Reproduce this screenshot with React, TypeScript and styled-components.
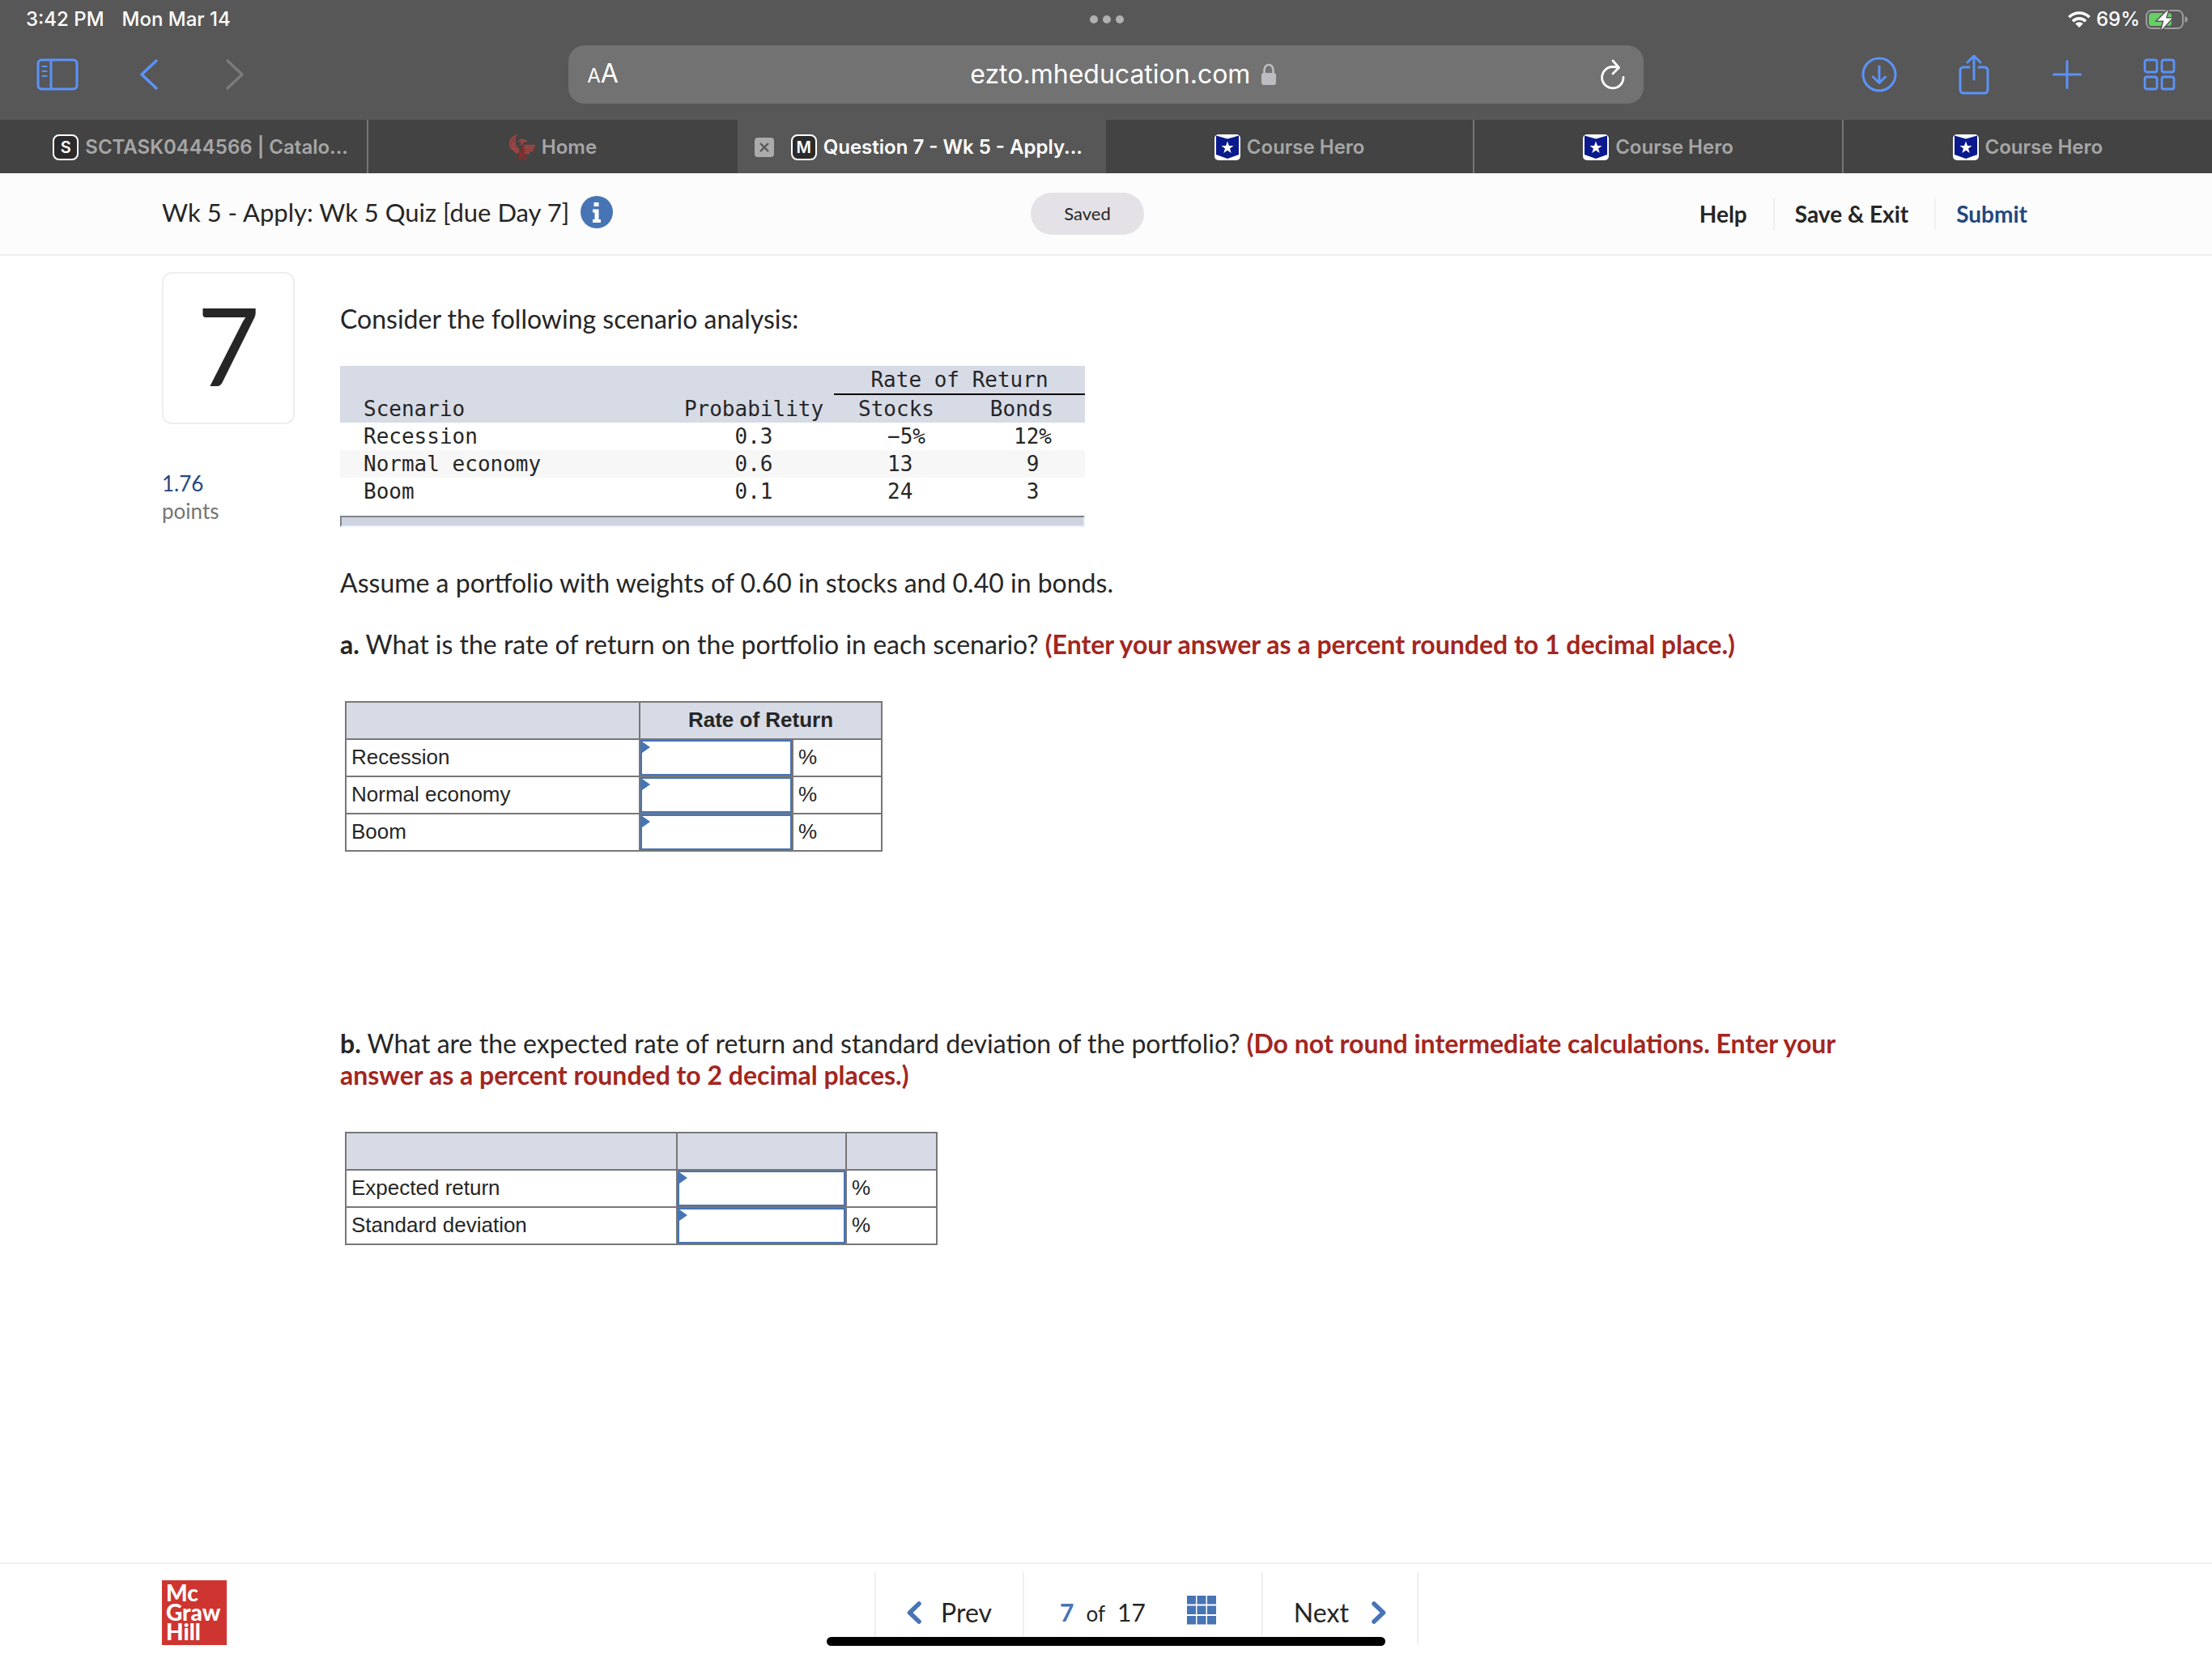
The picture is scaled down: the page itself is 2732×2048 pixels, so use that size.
import React from 'react';
import styled, { createGlobalStyle } from 'styled-components';

const system = `Inter, "Liberation Sans", sans-serif`;
const brand = `Lato, "Open Sans", sans-serif`;
const plain = `"Liberation Sans", Arial, sans-serif`;
const mono = `"DejaVu Sans Mono", "Liberation Mono", monospace`;

const chrome = '#575757';
const accent = '#5b93fa';
const blue = '#4774b5';
const navy = '#23487f';
const ink = '#262626';
const shade = '#d7dbe6';
const line = '#f0f0f0';
const rule = '#777777';

const GlobalStyle = createGlobalStyle`
  *, *::before, *::after { box-sizing: border-box; }
  body { margin: 0; background: #fff; color: ${ink}; font-family: ${brand}; }
  button { border: 0; padding: 0; margin: 0; background: none; font: inherit; color: inherit; cursor: pointer; }
  a { color: inherit; text-decoration: none; }
  svg { display: block; flex: none; }
`;

const Page = styled.div`
  display: flex;
  flex-direction: column;
  min-height: 100vh;
`;

/* Browser chrome */

const Chrome = styled.header`
  background: ${chrome};
  color: #fff;
  font-family: ${system};
`;

const StatusBar = styled.div`
  display: grid;
  grid-template-columns: 1fr auto 1fr;
  align-items: center;
  height: 48px;
  padding: 0 30px 0 32px;
  font-size: 24px;
  line-height: 30px;
  font-weight: 500;
`;

const StatusGroup = styled.div<{ $end?: boolean; $gap: number }>`
  display: flex;
  align-items: center;
  justify-content: ${(p) => (p.$end ? 'flex-end' : 'flex-start')};
  gap: ${(p) => p.$gap}px;
`;

const Toolbar = styled.div`
  display: grid;
  grid-template-columns: 1fr 48.6% 1fr;
  align-items: center;
  padding: 8px 0 20px;
`;

const ToolGroup = styled.nav<{ $end?: boolean }>`
  display: flex;
  align-items: center;
  justify-content: ${(p) => (p.$end ? 'flex-end' : 'flex-start')};
  gap: 76px;
  padding: 0 45px;
`;

const ToolButton = styled.button<{ $off?: boolean }>`
  color: ${(p) => (p.$off ? '#7b7b7b' : accent)};
`;

const AddressBar = styled.div`
  display: flex;
  align-items: center;
  height: 72px;
  padding: 0 23px;
  border-radius: 20px;
  background: #727272;
`;

const ReaderButton = styled.button`
  display: flex;
  align-items: baseline;
  font-size: 32px;
  line-height: 40px;
`;

const SmallA = styled.span`
  font-size: 24px;
`;

const Address = styled.button`
  flex: 1;
  display: flex;
  align-items: center;
  justify-content: center;
  gap: 14px;
  padding-left: 34px;
  font-size: 32px;
  line-height: 40px;
`;

const TabBar = styled.div`
  display: grid;
  grid-template-columns: repeat(6, minmax(0, 1fr));
  height: 66px;
  background: #434343;
`;

const Tab = styled.div<{ $active?: boolean; $long?: boolean; $edge?: boolean }>`
  display: flex;
  align-items: center;
  justify-content: ${(p) => (p.$active ? 'flex-start' : 'center')};
  gap: 21px;
  padding-top: 2px;
  padding-left: ${(p) => (p.$active ? 21 : p.$long ? 42 : 0)}px;
  border-right: ${(p) => (p.$edge ? '2px solid #757575' : '0')};
  background: ${(p) => (p.$active ? chrome : 'transparent')};
  color: ${(p) => (p.$active ? '#fff' : '#a6a6a6')};
`;

const TabLink = styled.a`
  display: flex;
  align-items: center;
  gap: 8px;
  font-size: 24px;
  line-height: 32px;
  font-weight: 600;
  white-space: nowrap;
`;

const LetterIcon = styled.span`
  display: flex;
  align-items: center;
  justify-content: center;
  width: 32px;
  height: 32px;
  border: 2px solid #fff;
  border-radius: 8px;
  background: #2b2b2b;
  color: #fff;
  font-size: 20px;
  line-height: 24px;
`;

/* Assignment header */

const Header = styled.div`
  display: grid;
  grid-template-columns: 1fr auto 1fr;
  align-items: center;
  height: 102px;
  padding: 0 200px;
  border-bottom: 2px solid ${line};
  background: #fcfcfc;
`;

const TitleGroup = styled.div`
  display: flex;
  align-items: center;
  gap: 14px;
  padding-bottom: 4px;
`;

const Title = styled.h1`
  margin: 0;
  font-size: 31px;
  line-height: 40px;
  font-weight: 400;
  white-space: nowrap;
`;

const SavedPill = styled.div`
  width: 140px;
  margin-right: 46px;
  border-radius: 26px;
  background: #e4e2e6;
  font-size: 22px;
  line-height: 52px;
  text-align: center;
`;

const Actions = styled.div`
  display: flex;
  justify-content: flex-end;
  padding-right: 28px;
`;

const Action = styled.button<{ $primary?: boolean }>`
  padding: 0 32px 0 25px;
  border-right: 2px solid ${line};
  color: ${(p) => (p.$primary ? navy : ink)};
  font-size: 28px;
  line-height: 40px;
  font-weight: 700;

  &:last-child {
    padding-right: 0;
    border-right: 0;
  }
`;

/* Question */

const Main = styled.main`
  flex: 1;
  display: grid;
  grid-template-columns: 164px minmax(0, 1fr);
  column-gap: 56px;
  padding: 20px 200px 60px;
`;

const NumberCard = styled.div`
  display: flex;
  align-items: center;
  justify-content: center;
  height: 188px;
  margin-bottom: 56px;
  padding-bottom: 8px;
  border: 2px solid #eee;
  border-radius: 12px;
  font-size: 134px;
  line-height: 160px;
`;

const Points = styled.div<{ $value?: boolean }>`
  color: ${(p) => (p.$value ? navy : '#757575')};
  font-size: 26px;
  line-height: 34px;
`;

const Content = styled.section`
  padding-top: 38px;
`;

const Text = styled.p<{ $top?: number }>`
  max-width: 1900px;
  margin: ${(p) => p.$top ?? 0}px 0 0;
  font-size: 32px;
  line-height: 39px;
`;

const Hint = styled.strong`
  color: #a32621;
`;

const ScenarioTable = styled.table`
  width: 920px;
  margin-top: 39px;
  border-collapse: collapse;
  table-layout: fixed;
  font-family: ${mono};
  font-size: 26px;
  line-height: 34px;

  th, td { padding: 0; font-weight: 400; }
  thead { background: ${shade}; }
  tbody tr:nth-child(even) { background: #f7f7f7; }
`;

const NameCell = styled.th`
  text-align: left;
  && { padding-left: 29px; }
`;

const GroupCell = styled.th`
  border-bottom: 2px solid #000;
`;

const CenterCell = styled.td`
  text-align: center;
`;

const ValueCell = styled.td`
  text-align: right;
  white-space: pre;
  && { padding-right: 41px; }
`;

const Bar = styled.hr`
  width: 920px;
  height: 14px;
  margin: 13px 0 0;
  border: 2px solid;
  border-color: #80838c #e8eefc #e8eefc #80838c;
  background: #cfd3df;
`;

const AnswerTable = styled.table<{ $width: number }>`
  width: ${(p) => p.$width}px;
  margin: 51px 0 0 6px;
  border-collapse: collapse;
  table-layout: fixed;
  font-family: ${plain};
  font-size: 26px;
  line-height: 30px;

  th, td { height: 46px; padding: 0 6px 2px; border: 2px solid ${rule}; text-align: left; font-weight: 400; }
  thead th, thead td { background: ${shade}; text-align: center; font-weight: 700; }
`;

const Col = styled.col<{ $width?: number }>`
  width: ${(p) => (p.$width ? `${p.$width}px` : 'auto')};
`;

const EntryCell = styled.td`
  position: relative;
  && { padding: 0; }

  &::before {
    content: '';
    position: absolute;
    top: 2px;
    left: 2px;
    width: 10px;
    height: 14px;
    background: ${blue};
    clip-path: polygon(0 0, 100% 50%, 0 100%);
  }
`;

const Entry = styled.input`
  display: block;
  width: 100%;
  height: 44px;
  padding: 0 12px;
  border: 2px solid ${blue};
  border-radius: 0;
  outline: 0;
  background: #fff;
  font: inherit;
`;

const Part = styled.section<{ $top: number }>`
  margin-top: ${(p) => p.$top}px;
`;

/* Footer */

const Footer = styled.footer`
  display: grid;
  grid-template-columns: 1fr auto 1fr;
  align-items: start;
  height: 118px;
  padding: 10px 100px 0 200px;
  border-top: 2px solid ${line};
`;

const Logo = styled.a`
  width: 80px;
  height: 80px;
  margin-top: 10px;
  padding: 3px 5px;
  background: #cf3530;
  color: #fff;
  font-size: 28px;
  line-height: 24px;
  font-weight: 900;
`;

const Pager = styled.nav`
  display: flex;
  height: 90px;
  border-left: 2px solid ${line};
`;

const PagerItem = styled.div<{ $left: number; $right: number; $gap: number }>`
  display: flex;
  align-items: center;
  gap: ${(p) => p.$gap}px;
  padding: 10px ${(p) => p.$right}px 0 ${(p) => p.$left}px;
  border-right: 2px solid ${line};
  font-size: 32px;
  line-height: 40px;
`;

const PagerButton = styled.button<{ $gap: number }>`
  display: flex;
  align-items: center;
  gap: ${(p) => p.$gap}px;
`;

const Count = styled.span`
  display: flex;
  align-items: baseline;
  gap: 15px;
  font-size: 30px;
`;

const Current = styled.strong`
  color: ${blue};
`;

const Of = styled.span`
  font-size: 26px;
`;

const GridButton = styled.button`
  color: ${blue};
`;

const HomeIndicator = styled.div`
  position: fixed;
  right: 0;
  bottom: 15px;
  left: 0;
  width: 690px;
  height: 11px;
  margin: 0 auto;
  border-radius: 6px;
  background: #000;
`;

/* Icons */

const Dots = () => (
  <svg width="42" height="10" fill="#b0b0b0" aria-hidden="true">
    <circle cx="5" cy="5" r="5" />
    <circle cx="21" cy="5" r="5" />
    <circle cx="37" cy="5" r="5" />
  </svg>
);

const Wifi = () => (
  <svg width="28" height="20" viewBox="0 0 28 20" fill="none" stroke="#fff" strokeWidth="3.6" aria-hidden="true">
    <path d="M1.4 7.2a18 18 0 0 1 25.2 0" />
    <path d="M6 12.2a11.400 11.400 0 0 1 16 0" />
    <path d="M14 20l-4.800-4.800a6.800 6.800 0 0 1 9.600 0z" fill="#fff" stroke="none" />
  </svg>
);

const Battery = () => (
  <svg width="52" height="28" viewBox="0 0 52 28" aria-hidden="true">
    <rect x="1" y="3" width="45" height="22" rx="6.5" fill="none" stroke="#9d9d9d" strokeWidth="2" />
    <path d="M48.500 10c2.600 1 3.500 2.400 3.500 4s-.9 3-3.500 4z" fill="#9d9d9d" />
    <rect x="4" y="6" width="28" height="16" rx="3.5" fill="#67ce67" />
    <path d="M28 2L14.500 15.500h8L19.500 27 32.500 12.500H25z" fill="#fff" stroke={chrome} strokeWidth="3" paintOrder="stroke" />
  </svg>
);

const Sidebar = () => (
  <svg width="52" height="40" viewBox="0 0 52 40" fill="none" stroke="currentColor" strokeWidth="3" aria-hidden="true">
    <rect x="2" y="2" width="48" height="36" rx="4.5" />
    <path d="M18 2v36" />
    <path d="M7.500 10h5M7.500 16h5M7.500 22h5" strokeWidth="2.2" strokeLinecap="round" />
  </svg>
);

const ThinChevron = ({ right }: { right?: boolean }) => (
  <svg width="30" height="38" viewBox="0 0 30 38" fill="none" stroke="currentColor" strokeWidth="3.4" strokeLinecap="round" strokeLinejoin="round" aria-hidden="true">
    <path d={right ? 'M2 2l18 17L2 36' : 'M20 2L2 19l18 17'} />
  </svg>
);

const Lock = () => (
  <svg width="18" height="28" viewBox="0 0 18 28" aria-hidden="true">
    <path d="M3.500 14V8.500a5.500 6.500 0 0 1 11 0V14" fill="none" stroke="#bdbcc2" strokeWidth="2.6" />
    <rect y="12" width="18" height="15" rx="3" fill="#bdbcc2" />
  </svg>
);

const Reload = () => (
  <svg width="30" height="38" viewBox="0 0 30 38" fill="none" stroke="#fff" strokeWidth="2.8" strokeLinecap="round" strokeLinejoin="round" aria-hidden="true">
    <path d="M28 22.500A13.200 13.200 0 1 1 14.800 9.500c2.500 0 4.500.2 7 1" />
    <path d="M15 2l7.500 8.500L15 18" />
  </svg>
);

const Download = () => (
  <svg width="44" height="44" viewBox="0 0 44 44" fill="none" stroke="currentColor" strokeWidth="3" strokeLinecap="round" strokeLinejoin="round" aria-hidden="true">
    <circle cx="22" cy="22" r="20" />
    <path d="M22 12v20M14.500 25l7.500 7.500 7.500-7.500" />
  </svg>
);

const Share = () => (
  <svg width="40" height="50" viewBox="0 0 40 50" fill="none" stroke="currentColor" strokeWidth="3" strokeLinecap="round" strokeLinejoin="round" aria-hidden="true">
    <path d="M13 16H6a4 4 0 0 0-4 4v24a4 4 0 0 0 4 4h26a4 4 0 0 0 4-4V20a4 4 0 0 0-4-4h-7" />
    <path d="M19 31V2M11 10l8-8 8 8" />
  </svg>
);

const Plus = () => (
  <svg width="36" height="36" viewBox="0 0 36 36" fill="none" stroke="currentColor" strokeWidth="3" strokeLinecap="round" aria-hidden="true">
    <path d="M18 1.500v33M1.500 18h33" />
  </svg>
);

const TabsIcon = () => (
  <svg width="40" height="40" viewBox="0 0 40 40" fill="none" stroke="currentColor" strokeWidth="2.8" aria-hidden="true">
    <rect x="2" y="2" width="15" height="15" rx="2.5" />
    <rect x="23" y="2" width="15" height="15" rx="2.5" />
    <rect x="2" y="23" width="15" height="15" rx="2.5" />
    <rect x="23" y="23" width="15" height="15" rx="2.5" />
  </svg>
);

const CloseIcon = () => (
  <svg width="24" height="24" viewBox="0 0 24 24" aria-hidden="true">
    <rect width="24" height="24" rx="4" fill="#ababab" />
    <path d="M7 7l10 10M17 7L7 17" stroke="#575757" strokeWidth="2.4" />
  </svg>
);

const Phoenix = () => (
  <svg width="32" height="32" viewBox="0 0 32 32" fill="none" stroke="#9b4644" strokeWidth="2.4" aria-hidden="true">
    <path d="M9 1C1 5-1 12 3 17l7 6" />
    <path d="M8 5c-5 4-5 8-2 12l6 5" />
    <path d="M8 9c-3 3-1 7 4 10" />
    <path d="M12 9c2-3 6-3 8-1-4 0-5 2-5 5" />
    <path d="M18 14h14M18 17h13M19 20h10M18 23h7" />
    <path d="M17 14v6l-4 4M18 24l-7 3M20 27l-8 3M14 22l-1 10M20 23v9" stroke="#8e2b2a" />
  </svg>
);

const CourseHero = () => (
  <svg width="32" height="32" viewBox="0 0 32 32" aria-hidden="true">
    <rect width="32" height="32" rx="5" fill="#fff" />
    <path d="M2 1.500l14 4 14-4V25l-14 5-14-5z" fill="#0a1a8c" />
    <path d="M16 8.500l2 5.500h5.500L19 17.500l1.700 5.500-4.700-3.300-4.700 3.300 1.700-5.500L8.500 14H14z" fill="#fff" />
  </svg>
);

const Info = () => (
  <svg width="40" height="40" viewBox="0 0 40 40" aria-hidden="true">
    <circle cx="20" cy="20" r="20" fill={blue} />
    <path d="M16.500 8h6v5h-6zM15 16.500h7.500v12.500H25v4H15v-4h2.500v-8.500H15z" fill="#fff" />
  </svg>
);

const BoldChevron = ({ right }: { right?: boolean }) => (
  <svg width="18" height="28" viewBox="0 0 18 28" fill="none" stroke={blue} strokeWidth="5.5" strokeLinecap="round" strokeLinejoin="round" aria-hidden="true">
    <path d={right ? 'M3 3l11.500 11L3 25' : 'M15 3L3.500 14 15 25'} />
  </svg>
);

const Squares = () => (
  <svg width="36" height="42" viewBox="0 0 36 42" fill="currentColor" aria-hidden="true">
    {[0, 12.5, 25].map((y) => [0, 12.5, 25].map((x) => <rect key={`${x}-${y}`} x={x} y={y} width="11" height="10.5" />))}
  </svg>
);

/* Data */

type Scenario = { name: string; probability: string; stocks: string; bonds: string };

const scenarios: Scenario[] = [
  { name: 'Recession', probability: '0.3', stocks: '−5%', bonds: '12%' },
  { name: 'Normal economy', probability: '0.6', stocks: '13 ', bonds: '9 ' },
  { name: 'Boom', probability: '0.1', stocks: '24 ', bonds: '3 ' },
];

const AnswerRow = ({ id, label }: { id: string; label: string }) => (
  <tr>
    <th scope="row"><label htmlFor={id}>{label}</label></th>
    <EntryCell><Entry id={id} type="text" inputMode="decimal" /></EntryCell>
    <td>%</td>
  </tr>
);

export default function App() {
  return (
    <Page>
      <GlobalStyle />
      <Chrome>
        <StatusBar>
          <StatusGroup $gap={22}>
            <span>3:42 PM</span>
            <span>Mon Mar 14</span>
          </StatusGroup>
          <Dots />
          <StatusGroup $end $gap={7}>
            <Wifi />
            <span>69%</span>
            <Battery />
          </StatusGroup>
        </StatusBar>
        <Toolbar>
          <ToolGroup>
            <ToolButton aria-label="Show sidebar"><Sidebar /></ToolButton>
            <ToolButton aria-label="Back"><ThinChevron /></ToolButton>
            <ToolButton aria-label="Forward" $off><ThinChevron right /></ToolButton>
          </ToolGroup>
          <AddressBar>
            <ReaderButton aria-label="Page settings"><SmallA>A</SmallA><span>A</span></ReaderButton>
            <Address>ezto.mheducation.com<Lock /></Address>
            <button aria-label="Reload"><Reload /></button>
          </AddressBar>
          <ToolGroup $end>
            <ToolButton aria-label="Downloads"><Download /></ToolButton>
            <ToolButton aria-label="Share"><Share /></ToolButton>
            <ToolButton aria-label="New tab"><Plus /></ToolButton>
            <ToolButton aria-label="All tabs"><TabsIcon /></ToolButton>
          </ToolGroup>
        </Toolbar>
        <TabBar>
          <Tab $long $edge><TabLink href="#"><LetterIcon>S</LetterIcon>SCTASK0444566 | Catalo...</TabLink></Tab>
          <Tab><TabLink href="#"><Phoenix />Home</TabLink></Tab>
          <Tab $active>
            <button aria-label="Close tab"><CloseIcon /></button>
            <TabLink href="#"><LetterIcon>M</LetterIcon>Question 7 - Wk 5 - Apply...</TabLink>
          </Tab>
          <Tab $edge><TabLink href="#"><CourseHero />Course Hero</TabLink></Tab>
          <Tab $edge><TabLink href="#"><CourseHero />Course Hero</TabLink></Tab>
          <Tab><TabLink href="#"><CourseHero />Course Hero</TabLink></Tab>
        </TabBar>
      </Chrome>

      <Header>
        <TitleGroup>
          <Title>Wk 5 - Apply: Wk 5 Quiz [due Day 7]</Title>
          <button aria-label="Assignment information"><Info /></button>
        </TitleGroup>
        <SavedPill>Saved</SavedPill>
        <Actions>
          <Action>Help</Action>
          <Action>Save &amp; Exit</Action>
          <Action $primary>Submit</Action>
        </Actions>
      </Header>

      <Main>
        <aside>
          <NumberCard>7</NumberCard>
          <Points $value>1.76</Points>
          <Points>points</Points>
        </aside>
        <Content>
          <Text>Consider the following scenario analysis:</Text>
          <ScenarioTable>
            <colgroup>
              <Col $width={412} />
              <Col $width={198} />
              <Col $width={154} />
              <Col />
            </colgroup>
            <thead>
              <tr>
                <td colSpan={2} />
                <GroupCell colSpan={2} scope="colgroup">Rate of Return</GroupCell>
              </tr>
              <tr>
                <NameCell scope="col">Scenario</NameCell>
                <th scope="col">Probability</th>
                <th scope="col">Stocks</th>
                <th scope="col">Bonds</th>
              </tr>
            </thead>
            <tbody>
              {scenarios.map((s) => (
                <tr key={s.name}>
                  <NameCell scope="row">{s.name}</NameCell>
                  <CenterCell>{s.probability}</CenterCell>
                  <ValueCell>{s.stocks}</ValueCell>
                  <ValueCell>{s.bonds}</ValueCell>
                </tr>
              ))}
            </tbody>
          </ScenarioTable>
          <Bar />
          <Text $top={49}>Assume a portfolio with weights of 0.60 in stocks and 0.40 in bonds.</Text>
          <Part $top={37}>
            <Text>
              <strong>a.</strong> What is the rate of return on the portfolio in each scenario?{' '}
              <Hint>(Enter your answer as a percent rounded to 1 decimal place.)</Hint>
            </Text>
            <AnswerTable $width={664}>
              <colgroup>
                <Col $width={363} />
                <Col $width={189} />
                <Col />
              </colgroup>
              <thead>
                <tr>
                  <td />
                  <th scope="colgroup" colSpan={2}>Rate of Return</th>
                </tr>
              </thead>
              <tbody>
                <AnswerRow id="recession" label="Recession" />
                <AnswerRow id="normal" label="Normal economy" />
                <AnswerRow id="boom" label="Boom" />
              </tbody>
            </AnswerTable>
          </Part>
          <Part $top={217}>
            <Text>
              <strong>b.</strong> What are the expected rate of return and standard deviation of the portfolio?{' '}
              <Hint>(Do not round intermediate calculations. Enter your answer as a percent rounded to 2 decimal places.)</Hint>
            </Text>
            <AnswerTable $width={732}>
              <colgroup>
                <Col $width={409} />
                <Col $width={209} />
                <Col />
              </colgroup>
              <thead>
                <tr>
                  <td />
                  <td />
                  <td />
                </tr>
              </thead>
              <tbody>
                <AnswerRow id="expected" label="Expected return" />
                <AnswerRow id="deviation" label="Standard deviation" />
              </tbody>
            </AnswerTable>
          </Part>
        </Content>
      </Main>

      <Footer>
        <Logo href="#">Mc<br />Graw<br />Hill</Logo>
        <Pager aria-label="Questions">
          <PagerItem $left={38} $right={38} $gap={0}>
            <PagerButton $gap={24}><BoldChevron />Prev</PagerButton>
          </PagerItem>
          <PagerItem $left={44} $right={56} $gap={51}>
            <Count><Current>7</Current><Of>of</Of><span>17</span></Count>
            <GridButton aria-label="Question list"><Squares /></GridButton>
          </PagerItem>
          <PagerItem $left={38} $right={38} $gap={0}>
            <PagerButton $gap={28}>Next<BoldChevron right /></PagerButton>
          </PagerItem>
        </Pager>
      </Footer>
      <HomeIndicator />
    </Page>
  );
}
